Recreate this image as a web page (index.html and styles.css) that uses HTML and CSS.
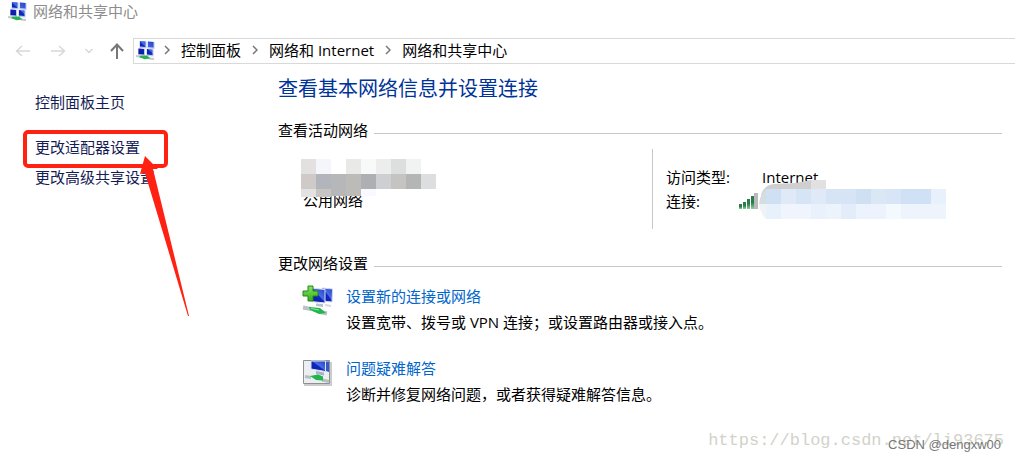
FILE: index.html
```html
<!DOCTYPE html>
<html lang="zh-CN">
<head>
<meta charset="utf-8">
<title>网络和共享中心</title>
<link rel="stylesheet" href="styles.css">
</head>
<body>
<svg width="0" height="0" class="defs" aria-hidden="true">
  <defs>
    <linearGradient id="screen" x1="0" y1="1" x2="1" y2="0">
      <stop offset="0" stop-color="#0a1a9a"/><stop offset=".5" stop-color="#1028c0"/><stop offset=".56" stop-color="#4a6ce0"/><stop offset="1" stop-color="#2040cc"/>
    </linearGradient>
    <linearGradient id="bar" x1="0" y1="0" x2="0" y2="1">
      <stop offset="0" stop-color="#2a7d48"/><stop offset=".5" stop-color="#2a7d48"/><stop offset="1" stop-color="#8fcfa2"/>
    </linearGradient>
    <linearGradient id="plus" x1="0" y1="0" x2="0" y2="1">
      <stop offset="0" stop-color="#8ae45c"/><stop offset="1" stop-color="#2fae1c"/>
    </linearGradient>
    <symbol id="net" viewBox="0 0 20 20">
      <g fill="#b9c6ee">
        <path d="M3.500 1l7 .5v7l-7-.5zM11.500 1.500l7 .5v7l-7-.5zM2 8.500l7 .5v7l-7-.5zM10.500 9l7 .5v7l-7-.5z"/>
      </g>
      <g fill="url(#screen)">
        <path d="M4 1l5.500.5v5.500L4 6.500zM12 1.500l5.500.5v5.500L12 7zM2.500 8.500L8 9v5.500L2.500 14zM11 9l5.500.5V15L11 14.500z"/>
      </g>
      <path d="M0 16l6 1M13 18.500l5 .5" stroke="#c3cacc" stroke-width="2"/>
      <path d="M4 15.800l7-.3 3.500 3-6 .8-5-2z" fill="#25b34b"/>
    </symbol>
  </defs>
</svg>

<header class="titlebar">
  <svg class="net-icon" aria-hidden="true"><use href="#net"/></svg>
  <span>网络和共享中心</span>
</header>

<nav class="toolbar" aria-label="导航">
  <div class="history">
    <button class="nav-btn" aria-label="后退"><svg width="16" height="14" viewBox="0 0 16 14"><path d="M15 7H1.500M7 2L1.500 7 7 12"/></svg></button>
    <button class="nav-btn" aria-label="前进"><svg width="16" height="14" viewBox="0 0 16 14"><path d="M1 7h13.500M9 2l5.500 5L9 12"/></svg></button>
    <button class="nav-btn small" aria-label="最近位置"><svg width="10" height="8" viewBox="0 0 10 8"><path d="M1.500 2L5 5.500 8.500 2"/></svg></button>
    <button class="nav-btn up" aria-label="上移"><svg width="16" height="16" viewBox="0 0 16 16"><path d="M8 16V1.500M2 8l6-6.500L14 8"/></svg></button>
  </div>
  <div class="address">
    <svg class="net-icon" aria-hidden="true"><use href="#net"/></svg>
    <svg class="chevron" viewBox="0 0 6 10" aria-hidden="true"><path d="M1 1l4 4-4 4"/></svg>
    <span>控制面板</span>
    <svg class="chevron" viewBox="0 0 6 10" aria-hidden="true"><path d="M1 1l4 4-4 4"/></svg>
    <span>网络和 Internet</span>
    <svg class="chevron" viewBox="0 0 6 10" aria-hidden="true"><path d="M1 1l4 4-4 4"/></svg>
    <span>网络和共享中心</span>
  </div>
</nav>

<div class="body">
  <aside class="sidebar">
    <a href="#">控制面板主页</a>
    <div class="marked">
      <a href="#">更改适配器设置</a>
      <span class="highlight"></span>
      <svg class="arrow" width="52" height="164" viewBox="0 0 52 164" aria-hidden="true"><path d="M7 3L20 16l-5 0L51 163h-1L7 20l-5 1z" fill="#ff2213"/></svg>
    </div>
    <a href="#">更改高级共享设置</a>
  </aside>

  <main class="content">
    <h1>查看基本网络信息并设置连接</h1>

    <h2>查看活动网络</h2>
    <section class="active">
      <div class="network">
        <span>公用网络</span>
        <svg class="mosaic-left" width="135" height="38" viewBox="0 0 135 38" shape-rendering="crispEdges" aria-hidden="true">
          <path fill="#e3e1e0" d="M0 0h15v15H0z"/><path fill="#f4f6f9" d="M15 0h15v15H15z"/><path fill="#e9e9e7" d="M45 0h15v15H45z"/><path fill="#f8faf9" d="M60 0h15v15H60z"/><path fill="#ededed" d="M75 0h15v15H75z"/><path fill="#dcdfde" d="M90 0h15v15H90z"/><path fill="#f1f3f2" d="M105 0h15v15h-15z"/>
          <path fill="#cfcac8" d="M0 15h15v15H0z"/><path fill="#b2b5bb" d="M15 15h15v15H15z"/><path fill="#b5b7b9" d="M30 15h15v22H30z"/><path fill="#bdbbb8" d="M45 15h15v22H45z"/><path fill="#adafb2" d="M60 15h15v15H60z"/><path fill="#cdcfd3" d="M75 15h15v15H75z"/><path fill="#c5c4c2" d="M90 15h15v15H90z"/><path fill="#b5b5b5" d="M105 15h15v15h-15z"/><path fill="#dddee0" d="M120 15h15v15h-15z"/>
          <path fill="#e2e2e2" d="M0 30h15v8H0z"/><path fill="#c8c4c2" d="M15 30h15v8H15z"/><path fill="#f8faff" d="M60 30h15v7H60z"/>
        </svg>
      </div>
      <dl class="details">
        <dt>访问类型:</dt><dd>Internet</dd>
        <dt>连接:</dt>
        <dd class="connection">
          <svg class="signal" width="19" height="17" viewBox="0 0 19 17" role="img" aria-label="信号强度">
            <g fill="url(#bar)"><path d="M0 11h3v5H0z"/><path d="M4 9h3v7H4z"/><path d="M8 6h3v10H8z"/><path d="M12 3h3v13h-3z"/></g><path fill="#b9b9b9" d="M15 0h4v16h-4z"/>
          </svg>
          <svg class="mosaic-right" width="187" height="39" viewBox="0 0 187 39" aria-hidden="true">
            <path fill="#cfcfcf" d="M2 15Q5 5 15 4L37 3 52 0V9H7v6z"/><path fill="#e1e1e1" d="M52 0h15v9H52z"/>
            <path fill="#d3dfdf" d="M0 24Q1 14 7 9v15z"/><path fill="#eff3f4" d="M0 24h7v15Q1 33 0 24z"/>
            <g shape-rendering="crispEdges">
            <path fill="#cfe0f4" d="M7 9h15v15H7z"/><path fill="#dfe9f8" d="M22 9h15v15H22z"/><path fill="#d5e5f6" d="M37 9h15v15H37z"/><path fill="#dfe9f8" d="M52 9h15v15H52z"/><path fill="#d7e4f5" d="M67 9h30v15H67z"/><path fill="#cfe0f3" d="M97 9h15v15H97z"/><path fill="#dae8f6" d="M112 9h15v15h-15z"/><path fill="#d7e5f7" d="M127 9h15v15h-15z"/><path fill="#d1e1f5" d="M142 9h30v15h-30z"/><path fill="#e8f1fb" d="M172 9h15v15h-15z"/>
            <path fill="#e7f1fc" d="M7 24h15v15H7z"/><path fill="#eff4fd" d="M22 24h30v15H22z"/><path fill="#e8f1fc" d="M52 24h15v15H52z"/><path fill="#edf3fb" d="M67 24h15v15H67z"/><path fill="#e2edf9" d="M82 24h15v15H82z"/><path fill="#edf3fc" d="M97 24h30v15H97z"/><path fill="#f4f9fd" d="M127 24h15v15h-15z"/><path fill="#eef4fc" d="M142 24h45v15h-45z"/>
            </g>
          </svg>
        </dd>
      </dl>
    </section>

    <h2>更改网络设置</h2>
    <section class="tasks">
      <article class="task">
        <svg width="32" height="32" viewBox="0 0 32 32" aria-hidden="true">
          <path d="M20 4l10.500 1-.5 13-9-1z" fill="url(#screen)" stroke="#cdd5ee"/><path d="M9 4l14 1.500V19L9 17.500z" fill="url(#screen)" stroke="#dbe1f4"/>
          <path d="M14 19.500l7 .5v3l-7-1z" fill="#b8c3d0"/><path d="M23 20l6 1v2l-6-1z" fill="#d3d9de"/>
          <path d="M1 23.500l8 1.500M18 28l7 1.500" stroke="#b9c2c7" stroke-width="4"/><path d="M7 23l11 1 6 5-7 1-9-4z" fill="#22b64b"/><path d="M9 24.500l8 1.500" stroke="#8ce5a0"/>
          <path d="M6 2h5v5h5v5h-5v5H6v-5H1V7h5z" fill="url(#plus)" stroke="#23861a"/>
        </svg>
        <div><a href="#">设置新的连接或网络</a><p>设置宽带、拨号或 VPN 连接<span class="mid">；</span>或设置路由器或接入点。</p></div>
      </article>
      <article class="task">
        <svg width="32" height="32" viewBox="0 0 32 32" aria-hidden="true">
          <path d="M2 29h27V6" fill="none" stroke="#ccc" stroke-width="2"/><path d="M1.500 4.500h26v23h-26z" fill="#eceff1" stroke="#8d9193"/>
          <path d="M24 5.500h3V16l-3-1z" fill="#3458c8"/><path d="M9 5h14.500v10.500L9 13z" fill="url(#screen)" stroke="#dde2f5"/><path d="M14 15l8 1.500v3L14 18z" fill="#a8b4c6"/>
          <path d="M3 20.500l6 1M20 24l7 1.500" stroke="#b5bfc2" stroke-width="3"/><path d="M8 20l8-1.500 5 2v4l-7-.5z" fill="#20b64b"/>
        </svg>
        <div><a href="#">问题疑难解答</a><p>诊断并修复网络问题<span class="mid">，</span>或者获得疑难解答信息。</p></div>
      </article>
    </section>
  </main>
</div>
<div class="watermark"><span class="wm-url">https://blog.csdn.net/li93675</span><span class="wm-user">CSDN @dengxw00</span></div>
</body>
</html>
```
FILE: styles.css
```css
* { box-sizing: border-box; }
body {
  margin: 0;
  min-height: 100vh;
  position: relative;
  background: #fff;
  color: #000;
  font: 15px/24px "Open Sans", "Noto Sans CJK SC", sans-serif;
}
h1, h2, p, dl, dd { margin: 0; font-weight: 400; }
a { text-decoration: none; }
.defs { position: absolute; }
.net-icon { width: 20px; height: 20px; flex: none; }
.mid { font-family: "Noto Sans CJK TC", sans-serif; }

.titlebar { display: flex; align-items: center; gap: 5px; padding-left: 8px; height: 22px; color: #8c8c8c; }
.toolbar { display: flex; margin-top: 16px; }
.history { display: flex; align-items: center; width: 133px; padding: 0 8px 0 15px; justify-content: space-between; }
.nav-btn { border: 0; background: none; padding: 0; display: flex; }
.nav-btn path { fill: none; stroke: #d8d8d8; stroke-width: 1.5; }
.nav-btn.small { margin: 0 -4px 0 -2px; }
.nav-btn.up path { stroke: #777; stroke-width: 2; }
.address { flex: 1; display: flex; align-items: center; gap: 11px; height: 26px; border: 1px solid #d9d9d9; border-right: 0; padding: 0 0 2px 2px; }
.chevron { width: 6px; height: 10px; flex: none; fill: none; stroke: #777; stroke-width: 1.5; }
.address .net-icon { margin-right: -3px; }

.body { display: flex; }
.sidebar { width: 278px; flex: none; padding: 26px 0 0 35px; display: flex; flex-direction: column; align-items: flex-start; }
.sidebar a { color: #151c55; white-space: nowrap; }
.marked { position: relative; margin: 21px 0 6px; }
.marked a { display: block; }
.highlight { position: absolute; left: -12px; top: -5px; width: 145px; height: 38px; border: 4px solid #ff2213; border-radius: 5px; pointer-events: none; }
.arrow { position: absolute; left: 103px; top: 18px; pointer-events: none; z-index: 1; }

.content { flex: 1; padding: 9px 13px 0 0; }
h1 { color: #003399; font-size: 20px; line-height: 32px; }
h2 { display: flex; align-items: center; gap: 6px; font-size: 15px; line-height: 24px; margin-top: 13px; }
h2::after { content: ""; flex: 1; height: 1px; background: #c8c8c8; margin-top: 6px; }

.active { display: flex; margin-top: 7px; height: 80px; }
.network { position: relative; width: 375px; padding: 39px 0 0 25px; border-right: 1px solid #c8c8c8; }
.mosaic-left { position: absolute; left: 23px; top: 10px; }
.details { display: grid; grid-template-columns: 73px 1fr; align-content: start; padding: 16px 0 0 13px; flex: 1; }
.details dd { padding-left: 23px; }
.details .connection { position: relative; display: flex; align-items: center; padding-left: 0; }
.mosaic-right { position: absolute; left: 20px; top: -9px; }
.active + h2 { margin-top: 22px; }

.tasks { display: flex; flex-direction: column; gap: 20px; padding: 9px 0 0 24px; }
.task { display: flex; gap: 12px; }
.task > svg { flex: none; }
.task a { color: #0066cc; display: block; line-height: 24px; }
.task p { line-height: 28px; }

.watermark { position: absolute; right: 11px; bottom: 4px; display: grid; justify-items: end; }
.wm-url, .wm-user { grid-area: 1 / 1; }
.wm-url { font: 17px/32px "Liberation Mono", monospace; color: #d2d2ca; }
.wm-user { font: 13px/24px "Liberation Sans", sans-serif; color: #777; align-self: end; padding-right: 3px; }
```
